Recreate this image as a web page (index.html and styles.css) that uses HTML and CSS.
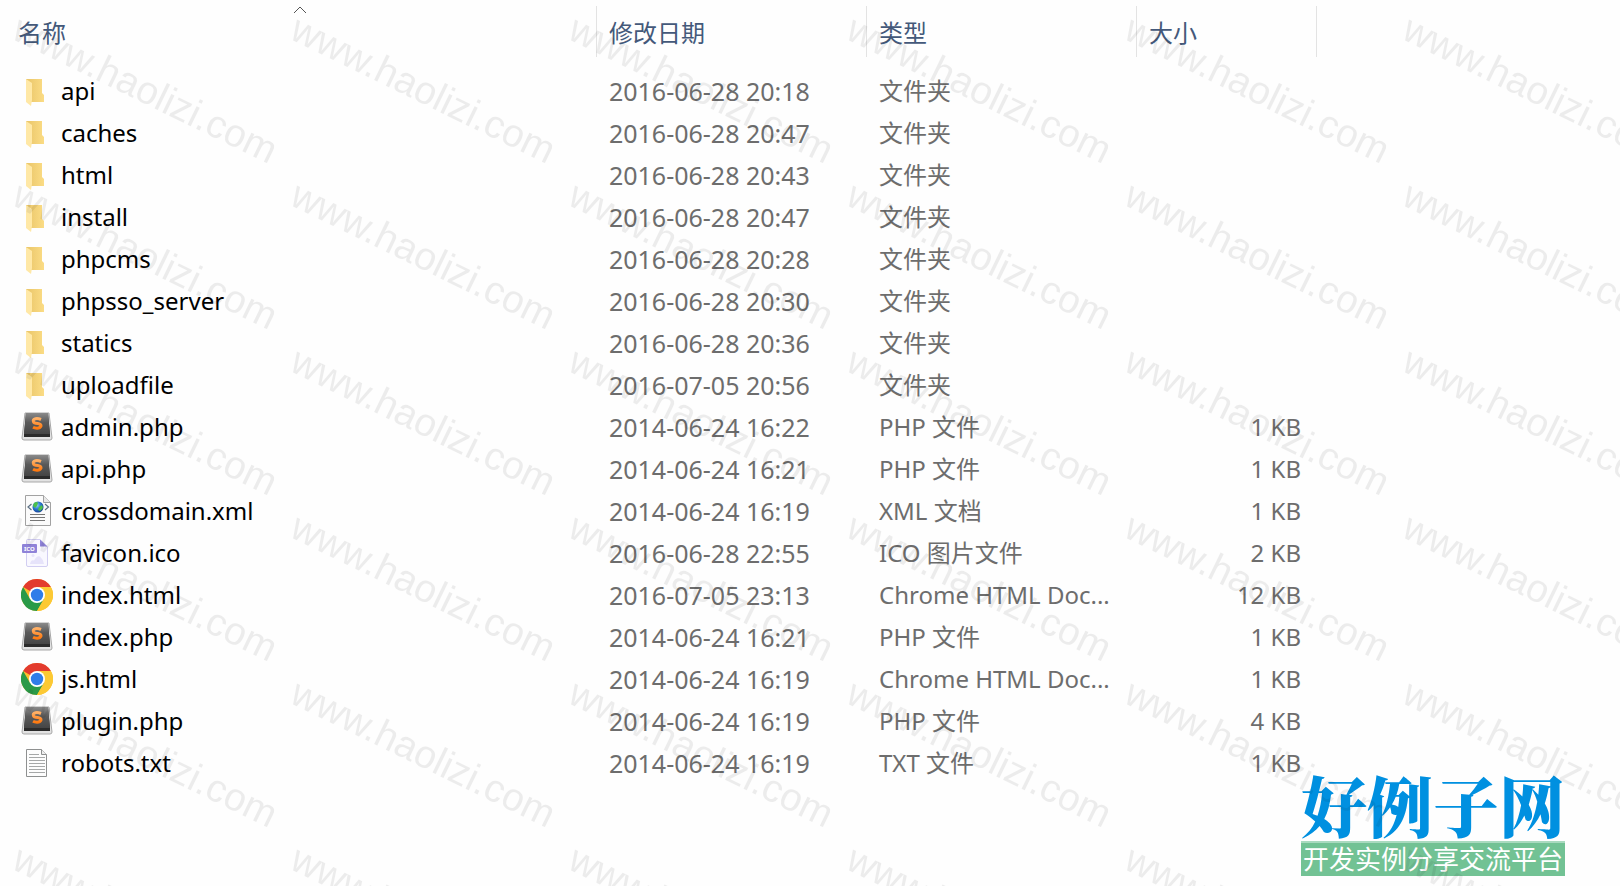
FILE: index.html
```html
<!DOCTYPE html>
<html lang="zh-CN">
<head>
    <meta charset="UTF-8">
    <title>文件列表</title>
    <link rel="stylesheet" href="styles.css">
</head>
<body>
    <!-- 图标定义 -->
    <svg class="defs" aria-hidden="true">
        <defs>
            <linearGradient id="folder-back" x1="0" y1="0" x2="1" y2="0">
                <stop offset="0" stop-color="#e9c568"/>
                <stop offset="1" stop-color="#fbdc85"/>
            </linearGradient>
            <linearGradient id="key-face" x1="0" y1="0" x2="0" y2="1">
                <stop offset="0" stop-color="#8a8a8a"/>
                <stop offset="0.45" stop-color="#5a5a5a"/>
                <stop offset="1" stop-color="#454545"/>
            </linearGradient>
            <linearGradient id="key-letter" x1="0" y1="0" x2="0" y2="1">
                <stop offset="0" stop-color="#ffb066"/>
                <stop offset="1" stop-color="#ff7a10"/>
            </linearGradient>
            <radialGradient id="globe" cx="0.4" cy="0.35" r="0.7">
                <stop offset="0" stop-color="#8fd0f8"/>
                <stop offset="0.5" stop-color="#2a78d0"/>
                <stop offset="1" stop-color="#123a90"/>
            </radialGradient>
            <symbol id="icon-folder" viewBox="0 0 32 32">
                <path d="M5 4H21V18L23 20V27H5Z" fill="url(#folder-back)"/>
                <path d="M5 4L11 8V25L10 31L5 27Z" fill="#ffe8a6"/>
            </symbol>
            <symbol id="icon-sublime" viewBox="0 0 32 32">
                <path d="M4 2H28L31 27Q31 29 29 29H3Q1 29 1 27Z" fill="#e2e2e2" stroke="#a8a8a8"/>
                <path d="M5 2H27L29 23V26H3V23Z" fill="#2b2b2b"/>
                <path d="M5 2H27L29 23H3Z" fill="url(#key-face)"/>
                <path d="M20 8.500Q17 7.200 14.500 7.700Q11.500 8.500 12.500 10.800Q13 12 16.500 12.500Q20.500 13.200 20 15.200Q19 17.300 16 17.200Q13.500 17.100 12 16.200" fill="none" stroke="url(#key-letter)" stroke-width="3"/>
            </symbol>
            <symbol id="icon-xml" viewBox="0 0 32 32">
                <path d="M4.500 0.500H22.500L29.500 7.500V30.500H4.500Z" fill="#fbfbfb" stroke="#a2a2a2"/>
                <path d="M22.500 0.500V7.500H29.500" fill="#e8e8e8" stroke="#a2a2a2"/>
                <circle cx="17" cy="12" r="5.500" fill="url(#globe)"/>
                <path d="M13 8Q16 6 17 8L16 11L14 13L12 11ZM18 12L21 10L22 13L19 16L17 15Z" fill="#4cc04a"/>
                <path d="M10.500 9L7 12L10.500 15M24 9L27.500 12L24 15" fill="none" stroke="#5b6f83" stroke-width="1.200"/>
                <path d="M9 19.500H24M9 22.500H24M9 25.500H24" stroke="#777" stroke-width="1.200"/>
            </symbol>
            <symbol id="icon-ico" viewBox="0 0 32 32">
                <path d="M5.500 3.500Q5.500 2.500 6.500 2.500H19L26.500 10V28Q26.500 29.500 25 29.500H7Q5.500 29.500 5.500 28Z" fill="#f9f8ff" stroke="#d2cef2"/>
                <path d="M19 2.500L26.500 9.500H19Z" fill="#8f83d8"/>
                <circle cx="12" cy="18.500" r="1.500" fill="#e6e3fa"/>
                <path d="M9 27Q10 22 13 23.500Q16 18 19 19.500Q22 22 23 27Z" fill="#e6e3fa"/>
                <rect x="1" y="7" width="15" height="9" rx="1" fill="#8f83d8"/>
                <text class="ico-label" x="3" y="14">ICO</text>
            </symbol>
            <symbol id="icon-chrome" viewBox="0 0 32 32">
                <circle cx="16" cy="16" r="16" fill="#fbc02d"/>
                <path d="M16 16L2.140 8A16 16 0 0 1 29.860 8Z" fill="#e33b2e"/>
                <path d="M2.140 8A16 16 0 0 0 16 32L22.930 20L16 16L9.070 20Z" fill="#2a9a48"/>
                <path d="M16 8H29.860A16 16 0 0 1 16 32L22.930 20Z" fill="#fcc934"/>
                <circle cx="16" cy="16" r="8" fill="#fff"/>
                <circle cx="16" cy="16" r="6.200" fill="#2f7de9"/>
            </symbol>
            <symbol id="icon-txt" viewBox="0 0 32 32">
                <path d="M5.500 2.500H20.500L25.500 7.500V29.500H5.500Z" fill="#fdfdfd" stroke="#8e9090"/>
                <path d="M20.500 2.500V7.500H25.500" fill="#eee" stroke="#8e9090"/>
                <path d="M8 7.500H18M8 10.500H24M8 13.500H24M8 16.500H24M8 19.500H24M8 22.500H24M8 25.500H24" stroke="#a6a8a8"/>
            </symbol>
        </defs>
    </svg>

    <div class="explorer">
        <table class="file-table">
            <colgroup>
                <col class="col-name">
                <col class="col-date">
                <col class="col-type">
                <col class="col-size">
                <col>
            </colgroup>
            <thead>
                <tr>
                    <th aria-sort="ascending">
                        <button type="button">名称</button>
                        <svg class="sort-arrow" viewBox="0 0 14 8" aria-hidden="true"><path d="M1 7L7 1L13 7"/></svg>
                    </th>
                    <th><button type="button">修改日期</button></th>
                    <th><button type="button">类型</button></th>
                    <th><button type="button">大小</button></th>
                    <td></td>
                </tr>
            </thead>
            <tbody>
                <!-- 数据由脚本填充 -->
            </tbody>
        </table>
    </div>

    <!-- 站点标识 -->
    <div class="brand">
        <div class="brand-name">好例子网</div>
        <div class="brand-slogan">开发实例分享交流平台</div>
    </div>

    <!-- 水印 -->
    <svg class="watermark" aria-hidden="true">
        <defs>
            <pattern id="mark" width="278" height="166" patternUnits="userSpaceOnUse">
                <text class="mark-text" transform="translate(10 38) rotate(26)">www.haolizi.com</text>
            </pattern>
        </defs>
        <rect width="100%" height="100%" fill="url(#mark)"/>
    </svg>

    <script>
        const files = [
            { icon: 'folder', name: 'api', date: '2016-06-28 20:18', type: '文件夹', size: '' },
            { icon: 'folder', name: 'caches', date: '2016-06-28 20:47', type: '文件夹', size: '' },
            { icon: 'folder', name: 'html', date: '2016-06-28 20:43', type: '文件夹', size: '' },
            { icon: 'folder', name: 'install', date: '2016-06-28 20:47', type: '文件夹', size: '' },
            { icon: 'folder', name: 'phpcms', date: '2016-06-28 20:28', type: '文件夹', size: '' },
            { icon: 'folder', name: 'phpsso_server', date: '2016-06-28 20:30', type: '文件夹', size: '' },
            { icon: 'folder', name: 'statics', date: '2016-06-28 20:36', type: '文件夹', size: '' },
            { icon: 'folder', name: 'uploadfile', date: '2016-07-05 20:56', type: '文件夹', size: '' },
            { icon: 'sublime', name: 'admin.php', date: '2014-06-24 16:22', type: 'PHP 文件', size: '1 KB' },
            { icon: 'sublime', name: 'api.php', date: '2014-06-24 16:21', type: 'PHP 文件', size: '1 KB' },
            { icon: 'xml', name: 'crossdomain.xml', date: '2014-06-24 16:19', type: 'XML 文档', size: '1 KB' },
            { icon: 'ico', name: 'favicon.ico', date: '2016-06-28 22:55', type: 'ICO 图片文件', size: '2 KB' },
            { icon: 'chrome', name: 'index.html', date: '2016-07-05 23:13', type: 'Chrome HTML Doc...', size: '12 KB' },
            { icon: 'sublime', name: 'index.php', date: '2014-06-24 16:21', type: 'PHP 文件', size: '1 KB' },
            { icon: 'chrome', name: 'js.html', date: '2014-06-24 16:19', type: 'Chrome HTML Doc...', size: '1 KB' },
            { icon: 'sublime', name: 'plugin.php', date: '2014-06-24 16:19', type: 'PHP 文件', size: '4 KB' },
            { icon: 'txt', name: 'robots.txt', date: '2014-06-24 16:19', type: 'TXT 文件', size: '1 KB' }
        ];

        const tbody = document.querySelector('.file-table tbody');
        tbody.innerHTML = files.map(file => `
            <tr>
                <td>
                    <div class="file-name">
                        <svg class="icon" aria-hidden="true"><use href="#icon-${file.icon}"/></svg>
                        <span>${file.name}</span>
                    </div>
                </td>
                <td class="date">${file.date}</td>
                <td>${file.type}</td>
                <td class="size">${file.size}</td>
                <td></td>
            </tr>
        `).join('');
    </script>
</body>
</html>
```
FILE: styles.css
```css
body {
    margin: 0;
    position: relative;
    min-height: 100vh;
    overflow: hidden;
    background: #fefefe;
    color: #6d6d6d;
    font-family: "Noto Sans", "Noto Sans CJK SC", sans-serif;
    font-size: 24px;
}

.defs {
    position: absolute;
    width: 0;
    height: 0;
}

/* 文件列表 */
.file-table {
    width: 100%;
    table-layout: fixed;
    border-collapse: collapse;
}

.col-name {
    width: 36.85%;
}

.col-date,
.col-type {
    width: 16.67%;
}

.col-size {
    width: 11.11%;
}

.file-table th {
    position: relative;
    padding: 6px 0 13px;
    font-weight: normal;
}

.file-table th button {
    display: block;
    width: 100%;
    height: 51px;
    padding: 0 12px;
    border: none;
    border-right: 1px solid #e3e3e3;
    background: none;
    color: #44597a;
    font: inherit;
    text-align: left;
}

.file-table th:first-child button {
    padding-left: 18px;
}

.sort-arrow {
    position: absolute;
    top: 6px;
    left: 49%;
    width: 14px;
    height: 8px;
    fill: none;
    stroke: #555;
}

.file-table tbody td {
    height: 42px;
    padding: 0 12px;
    line-height: 42px;
    white-space: nowrap;
}

.file-table tbody td:first-child {
    padding-left: 21px;
}

.file-name {
    display: flex;
    align-items: center;
    gap: 8px;
    color: #000;
}

.icon {
    width: 32px;
    height: 32px;
}

.ico-label {
    font-family: "Noto Sans", sans-serif;
    font-size: 6px;
    font-weight: bold;
    fill: #fff;
}

.file-table .date {
    font-size: 25px;
}

.file-table .size {
    padding-right: 16px;
    text-align: right;
}

/* 右下角标识 */
.brand {
    position: absolute;
    right: 55px;
    bottom: 10px;
    width: 264px;
    text-align: center;
    white-space: nowrap;
}

.brand-name {
    margin-bottom: 4px;
    color: #0090e0;
    font-family: "Noto Serif CJK SC", "Noto Sans CJK SC", serif;
    font-size: 66px;
    font-weight: 900;
    line-height: 66px;
}

.brand-slogan {
    border-top: 2px solid #a9dabf;
    background: #72c294;
    color: #fff;
    font-size: 26px;
    line-height: 33px;
}

.watermark {
    position: absolute;
    top: 0;
    left: 0;
    width: 100%;
    height: 100%;
    pointer-events: none;
}

.mark-text {
    font-family: "Liberation Sans", sans-serif;
    font-size: 39px;
    fill: #000;
    fill-opacity: 0.07;
}
```
